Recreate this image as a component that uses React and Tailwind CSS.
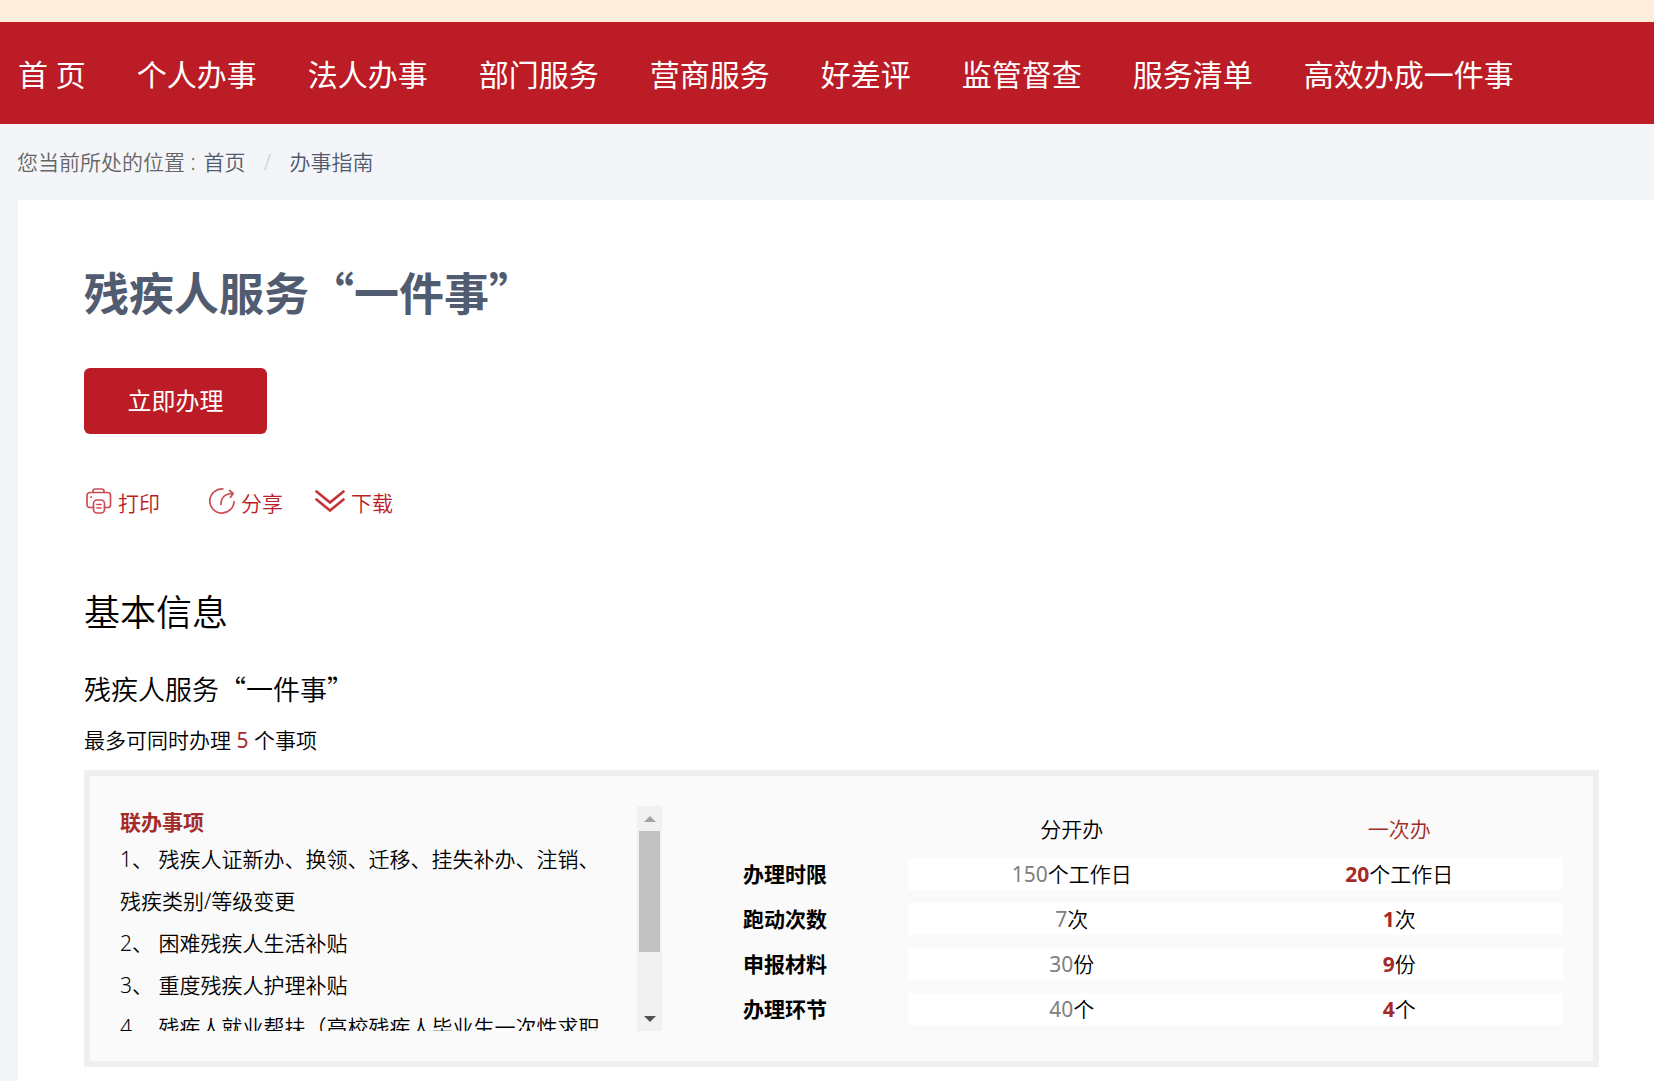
import React from 'react';

const NAV = ['首 页', '个人办事', '法人办事', '部门服务', '营商服务', '好差评', '监管督查', '服务清单', '高效办成一件事'];

const ITEMS = [
  '残疾人证新办、换领、迁移、挂失补办、注销、残疾类别/等级变更',
  '困难残疾人生活补贴',
  '重度残疾人护理补贴',
  '残疾人就业帮扶（高校残疾人毕业生一次性求职',
];

const ROWS = [
  { label: '办理时限', before: 150, after: 20, unit: '个工作日' },
  { label: '跑动次数', before: 7, after: 1, unit: '次' },
  { label: '申报材料', before: 30, after: 9, unit: '份' },
  { label: '办理环节', before: 40, after: 4, unit: '个' },
];

function PrintIcon() {
  return (
    <svg width="26" height="26" viewBox="0 0 26 26" fill="none" stroke="#cb4c53" strokeWidth="1.7" strokeLinecap="round" strokeLinejoin="round">
      <path d="M7 4.500V3a2 2 0 0 1 2-2h7a2 2 0 0 1 2 2v1.500" />
      <path d="M7.500 19.500H3.500a2.500 2.500 0 0 1-2.500-2.500V7.500A3 3 0 0 1 4 4.500h17.500a3 3 0 0 1 3 3V17a2.500 2.500 0 0 1-2.500 2.500h-3.500" />
      <rect x="7.500" y="12" width="11" height="13" rx="3.500" />
      <path d="M11 16.500h4M11 20h4M5 9.200h.4" />
    </svg>
  );
}

function ShareIcon() {
  return (
    <svg width="26" height="26" viewBox="0 0 26 26" fill="none" stroke="#cb4c53" strokeWidth="1.7" strokeLinecap="round" strokeLinejoin="round">
      <path d="M14 1A12.100 12.100 0 1 0 25 13.500" />
      <path d="M12 16.500C12 9.500 16 5.500 24 5.500M20.500 2.500L24.200 5.500L21.500 9.200" />
    </svg>
  );
}

function DownloadIcon() {
  return (
    <svg width="30" height="22" viewBox="0 0 30 22" fill="none" stroke="#c5323a" strokeWidth="2.600" strokeLinecap="round">
      <path d="M1.500 1.500L15 12.500L28.500 1.500M1.500 9.500L15 20.500L28.500 9.500" />
    </svg>
  );
}

function Action({ icon, label }) {
  return (
    <button className="flex items-center gap-1.5 leading-[30px]">
      {icon}
      <span className="pt-[3px]">{label}</span>
    </button>
  );
}

function Header() {
  return (
    <header>
      <div className="h-[22px] bg-[#fdeddb]" />
      <nav className="h-[102px] bg-[#bb1c25] flex items-center gap-[51px] pl-[18px] pt-1 text-white text-[30px] leading-10 whitespace-nowrap">
        {NAV.map(name => (
          <a key={name} href="#">{name}</a>
        ))}
      </nav>
    </header>
  );
}

function Scrollbar() {
  return (
    <div className="w-[25px] flex-shrink-0 bg-[#f1f1f1] flex flex-col items-center">
      <div className="h-[25px] flex items-center">
        <svg width="12" height="6" viewBox="0 0 12 6" fill="#a3a3a3"><path d="M0 6L6 0L12 6Z" /></svg>
      </div>
      <div className="w-[21px] h-[121px] bg-[#c1c1c1]" />
      <div className="h-[25px] mt-auto flex items-center">
        <svg width="12" height="6" viewBox="0 0 12 6" fill="#505050"><path d="M0 0L6 6L12 0Z" /></svg>
      </div>
    </div>
  );
}

function Summary() {
  return (
    <div className="mt-[15px] border-[6px] border-[#efefef] bg-[#fafafa] px-[30px] pt-6 pb-[30px] flex items-start">
      <div className="w-[542px] flex-shrink-0 h-[225px] mt-1.5 flex">
        <div className="flex-1 pr-6 overflow-hidden">
          <h4 className="font-bold leading-8 text-[#a52a2a]">联办事项</h4>
          <ol className="leading-[42px]">
            {ITEMS.map((item, i) => (
              <li key={item}>{`${i + 1}、 ${item}`}</li>
            ))}
          </ol>
        </div>
        <Scrollbar />
      </div>

      <div className="flex-1 min-w-0">
        <table className="w-full table-fixed border-separate border-spacing-x-0 border-spacing-y-[13px] -mb-[13px] text-center leading-8">
          <thead>
            <tr>
              <td className="w-[246px]" />
              <th scope="col" className="text-center font-[350]">分开办</th>
              <th scope="col" className="text-center font-[350] text-[#a52a2a]">一次办</th>
            </tr>
          </thead>
          <tbody>
            {ROWS.map(({ label, before, after, unit }) => (
              <tr key={label}>
                <th scope="row" className="text-center font-bold">{label}</th>
                <td className="bg-white"><span className="text-[#808080] font-normal">{before}</span>{unit}</td>
                <td className="bg-white"><b className="font-bold text-[#a52a2a]">{after}</b>{unit}</td>
              </tr>
            ))}
          </tbody>
        </table>
      </div>
    </div>
  );
}

export default function App() {
  return (
    <div lang="zh-CN" className="min-h-screen flex flex-col bg-[#f3f5f9] text-black text-[21px] font-['Noto_Sans','Noto_Sans_CJK_SC',sans-serif]">
      <Header />

      <div className="h-[76px] flex items-center pl-[17px] pt-0.5 font-[350] text-[#515a6e]">
        <span className="mr-2 text-[#666]">您当前所处的位置 :</span>
        <a href="#">首页</a>
        <span className="mx-[18px] text-[#d5d9e0] font-normal">/</span>
        <a href="#">办事指南</a>
      </div>

      <main className="flex-1 ml-[18px] bg-white pl-[66px] pr-[55px] pt-[62px] font-[350]">
        <h1 className="text-[45px] leading-[60px] font-bold text-[#515c70] font-['Noto_Sans_CJK_SC',sans-serif]">残疾人服务“一件事”</h1>
        <button className="mt-[46px] block w-[183px] h-[66px] rounded-md bg-[#bb1c25] text-white text-2xl font-normal">立即办理</button>

        <div className="mt-[52px] h-[30px] pl-0.5 flex items-center text-[#bb1c25]">
          <Action icon={<PrintIcon />} label="打印" />
          <div className="ml-[49px] mr-8"><Action icon={<ShareIcon />} label="分享" /></div>
          <Action icon={<DownloadIcon />} label="下载" />
        </div>

        <h2 className="mt-[73px] text-4xl leading-[48px]">基本信息</h2>
        <h3 className="mt-[34px] text-[27px] leading-9 font-['Noto_Sans_CJK_SC',sans-serif]">残疾人服务“一件事”</h3>
        <p className="mt-[18px] leading-[30px]">最多可同时办理 <span className="text-[#a52a2a] font-normal">5</span> 个事项</p>
        <Summary />
      </main>
    </div>
  );
}
